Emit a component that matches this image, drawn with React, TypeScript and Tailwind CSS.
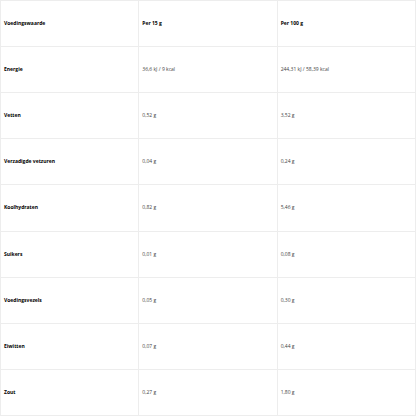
const rows: [string, string, string][] = [
  ['Energie', '36,6 kJ / 9 kcal', '244,31 kJ / 58,39 kcal'],
  ['Vetten', '0,52 g', '3,52 g'],
  ['Verzadigde vetzuren', '0,04 g', '0,24 g'],
  ['Koolhydraten', '0,82 g', '5,46 g'],
  ['Suikers', '0,01 g', '0,08 g'],
  ['Voedingsvezels', '0,05 g', '0,30 g'],
  ['Eiwitten', '0,07 g', '0,44 g'],
  ['Zout', '0,27 g', '1,80 g'],
];

function Cell({ children, bold }: { children: React.ReactNode; bold?: boolean }) {
  return (
    <div
      className={`flex items-center px-[3px] border-r border-b border-[#ededed] text-[5px] leading-none ${
        bold ? 'font-bold text-black' : 'text-[#444]'
      }`}
    >
      {children}
    </div>
  );
}

export default function App() {
  return (
    <div className="w-[416px] h-[416px] bg-white" style={{ fontFamily: '"Open Sans", sans-serif' }}>
      <div className="grid grid-cols-3 grid-rows-9 w-full h-full border-l border-t border-[#ededed]">
        <Cell bold>Voedingswaarde</Cell>
        <Cell bold>Per 15 g</Cell>
        <Cell bold>Per 100 g</Cell>
        {rows.map(([name, a, b]) => (
          <div key={name} className="contents">
            <Cell bold>{name}</Cell>
            <Cell>{a}</Cell>
            <Cell>{b}</Cell>
          </div>
        ))}
      </div>
    </div>
  );
}
